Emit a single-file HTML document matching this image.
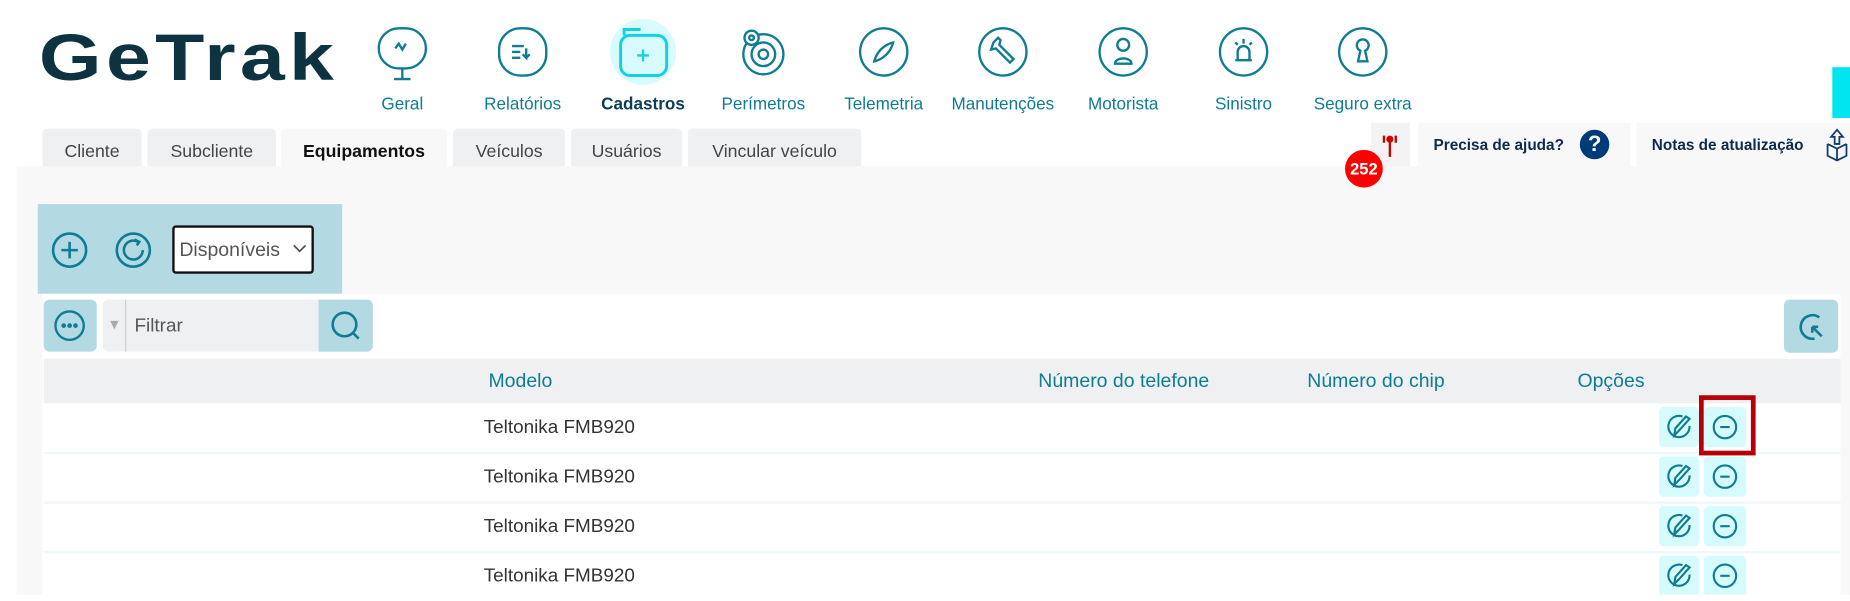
<!DOCTYPE html>
<html><head><meta charset="utf-8"><style>
html,body{margin:0;padding:0;background:#fff;overflow:hidden;width:1850px;height:595px}
#w{position:absolute;left:0;top:0;width:1568px;height:504px;transform:scale(1.17985);transform-origin:0 0;font-family:"Liberation Sans",sans-serif}
.a{position:absolute}
.nav{position:absolute;top:81px;width:120px;text-align:center;font-size:14.5px;color:#0e7c93}
.tab{position:absolute;top:109px;height:32px;background:#eef0f2;border-radius:4px 4px 0 0;font-size:15px;color:#444;text-align:center;line-height:40px}
.hd{position:absolute;top:314px;font-size:16.5px;color:#0e7c93}
.row{position:absolute;left:37px;width:1523px;height:41px;border-bottom:2px solid #eef7f9}
.cell{position:absolute;left:373px;top:12px;font-size:16px;color:#333}
</style></head><body><div id="w">
<div class="a" style="left:33px;top:17px;font-size:56px;font-weight:bold;color:#0d3340;letter-spacing:3px;transform:scaleX(1.22);transform-origin:0 0;line-height:64px">GeTrak</div>

<svg class="a" style="left:0;top:0" width="1300" height="80" fill="none" stroke="#0e7c93" stroke-width="2">
<rect x="321" y="24" width="40" height="34" rx="17"/><path d="M341 58v8M334 67h14M335 41l3-4 3 5 3-5"/>
<rect x="423" y="24" width="40" height="40" rx="18"/><path d="M434 39h10M434 44h7M434 49h7M446 41v8l-3-3M446 49l3-3"/>
<circle cx="545" cy="44" r="28" fill="#d7fbfe" stroke="none"/><rect x="526" y="30" width="39" height="34" rx="8" stroke="#12d2e2" stroke-width="2.5"/><path d="M529 30v-5h14" stroke="#12d2e2" stroke-width="2.5"/><path d="M545 42v10M540 47h10" stroke="#12d2e2"/>
<circle cx="647" cy="46" r="17"/><circle cx="647" cy="46" r="10"/><circle cx="647" cy="46" r="4"/><circle cx="637" cy="32" r="6" fill="#fff"/><circle cx="637" cy="32" r="2"/>
<rect x="729" y="24" width="40" height="40" rx="20"/><path d="M741 52c2-8 8-14 16-16-2 8-8 14-16 16z"/>
<rect x="830" y="24" width="40" height="40" rx="20"/><path d="M842 36l4-4 2 2-1 4 12 12-3 3-12-12-4 1z"/>
<rect x="932" y="24" width="40" height="40" rx="20"/><circle cx="952" cy="38" r="5"/><path d="M945 54c0-6 14-6 14 0z"/>
<rect x="1034" y="24" width="40" height="40" rx="20"/><path d="M1047 51h14M1049 51v-7a5 5 0 0 1 10 0v7M1054 33v4M1047 36l2 2M1061 36l-2 2"/>
<rect x="1135" y="24" width="40" height="40" rx="20"/><path d="M1151 52h8l-2-9a5 5 0 1 0-4 0z"/>
</svg>
<div class="nav" style="left:281px">Geral</div>
<div class="nav" style="left:383px">Relatórios</div>
<div class="nav" style="left:485px;font-weight:bold;color:#0d3d56">Cadastros</div>
<div class="nav" style="left:587px">Perímetros</div>
<div class="nav" style="left:689px">Telemetria</div>
<div class="nav" style="left:790px">Manutenções</div>
<div class="nav" style="left:892px">Motorista</div>
<div class="nav" style="left:994px">Sinistro</div>
<div class="nav" style="left:1095px">Seguro extra</div>

<div class="a" style="left:1553px;top:57px;width:15px;height:43px;background:#00e5f0"></div>

<div class="a" style="left:14px;top:141px;width:1554px;height:363px;background:#f8f8f8"></div>
<div class="tab" style="left:36px;width:84px">Cliente</div>
<div class="tab" style="left:125px;width:109px">Subcliente</div>
<div class="tab" style="left:238px;width:141px;background:#f8f8f8;font-weight:bold;color:#111">Equipamentos</div>
<div class="tab" style="left:384px;width:95px">Veículos</div>
<div class="tab" style="left:484px;width:94px">Usuários</div>
<div class="tab" style="left:583px;width:147px">Vincular veículo</div>

<div class="a" style="left:1162px;top:104px;width:33px;height:37px;background:#f3f3f3"></div>
<svg class="a" style="left:1170px;top:113px" width="16" height="22" fill="none" stroke="#c00" stroke-width="2"><path d="M8 6v14"/><circle cx="8" cy="5" r="2" fill="#c00"/><path d="M3 2v6M13 2v6"/></svg>
<div class="a" style="left:1140px;top:127px;width:32px;height:32px;border-radius:50%;background:#f00;color:#fff;font-weight:bold;font-size:14px;text-align:center;line-height:32px">252</div>
<div class="a" style="left:1202px;top:104px;width:180px;height:37px;background:#f8f8f8"></div>
<div class="a" style="left:1215px;top:115px;font-size:13px;font-weight:bold;color:#0d2b4e">Precisa de ajuda?</div>
<div class="a" style="left:1339px;top:110px;width:25px;height:25px;border-radius:50%;background:#003a78;color:#fff;font-weight:bold;font-size:19px;text-align:center;line-height:25px">?</div>
<div class="a" style="left:1387px;top:104px;width:181px;height:37px;background:#f8f8f8"></div>
<div class="a" style="left:1400px;top:115px;font-size:13px;font-weight:bold;color:#0d2b4e">Notas de atualização</div>
<svg class="a" style="left:1547px;top:108px" width="21" height="30" fill="none" stroke="#0d3d6e" stroke-width="1.5"><path d="M10 2l-5 6h3v6h4V8h3zM2 14l8 4 8-4M2 14v10l8 4 8-4V14M10 18v10"/></svg>

<div class="a" style="left:32px;top:173px;width:258px;height:76px;background:#b3d9e2"></div>
<svg class="a" style="left:40px;top:194px" width="100" height="36" fill="none" stroke="#0e7c93" stroke-width="2.2"><circle cx="19" cy="18" r="14"/><path d="M19 11v14M12 18h14"/><circle cx="73" cy="18" r="14"/><path d="M77 11a8 8 0 1 0 4 7"/><path d="M74 9l4 2-2 3"/></svg>
<div class="a" style="left:146px;top:191px;width:116px;height:37px;background:#fff;border:2px solid #111;border-radius:3px"></div>
<div class="a" style="left:152px;top:203px;font-size:16.5px;color:#555">Disponíveis</div>
<svg class="a" style="left:248px;top:207px" width="12" height="8" fill="none" stroke="#555" stroke-width="1.5"><path d="M1 1l5 5 5-5"/></svg>

<div class="a" style="left:36px;top:249px;width:1524px;height:255px;background:#fff"></div>
<div class="a" style="left:37px;top:254px;width:45px;height:44px;background:#b3d9e2;border-radius:5px"></div>
<svg class="a" style="left:45px;top:262px" width="30" height="28" fill="none" stroke="#0e7c93" stroke-width="2"><ellipse cx="14" cy="14" rx="12" ry="12"/><circle cx="9" cy="14" r="1" fill="#0e7c93"/><circle cx="14" cy="14" r="1" fill="#0e7c93"/><circle cx="19" cy="14" r="1" fill="#0e7c93"/></svg>
<div class="a" style="left:87px;top:254px;width:229px;height:44px;background:#eef0f2;border-radius:5px"></div>
<div class="a" style="left:91px;top:268px;font-size:12px;color:#aaa">▼</div>
<div class="a" style="left:106px;top:254px;width:1px;height:44px;background:#ccc"></div>
<div class="a" style="left:114px;top:268px;font-size:16px;color:#555">Filtrar</div>
<div class="a" style="left:270px;top:254px;width:46px;height:44px;background:#b3d9e2;border-radius:0 5px 5px 0"></div>
<svg class="a" style="left:280px;top:263px" width="28" height="28" fill="none" stroke="#0e7c93" stroke-width="2.2"><circle cx="12" cy="12" r="10"/><path d="M19 19l5 5"/></svg>
<div class="a" style="left:1512px;top:254px;width:46px;height:45px;background:#b3d9e2;border-radius:5px"></div>
<svg class="a" style="left:1522px;top:263px" width="28" height="28" fill="none" stroke="#0e7c93" stroke-width="2.2"><path d="M20 6a10 10 0 1 0-4 18"/><path d="M14 14l8 8M14 14v5M14 14h5"/></svg>

<div class="a" style="left:37px;top:304px;width:1523px;height:38px;background:#eff0f2"></div>
<div class="hd" style="left:414px">Modelo</div>
<div class="hd" style="left:880px">Número do telefone</div>
<div class="hd" style="left:1108px">Número do chip</div>
<div class="hd" style="left:1337px">Opções</div>

<div class="row" style="top:342px"><div class="cell">Teltonika FMB920</div></div>
<div class="row" style="top:384px"><div class="cell">Teltonika FMB920</div></div>
<div class="row" style="top:426px"><div class="cell">Teltonika FMB920</div></div>
<div class="row" style="top:468px;border:0"><div class="cell">Teltonika FMB920</div></div>

<svg class="a" style="left:1400px;top:340px" width="90" height="164">
<g id="r"><rect x="6" y="5" width="34" height="34" rx="4" fill="#d5fbfd"/><rect x="44" y="5" width="36" height="34" rx="4" fill="#d5fbfd"/>
<g fill="none" stroke="#0e7c93" stroke-width="1.8"><path d="M26 13a9 9 0 1 0 6 8"/><path d="M19 29l1-6 9-10 3 2-9 10z"/><circle cx="62" cy="22" r="9.5"/><path d="M58 22h8"/></g></g>
<use href="#r" y="42"/><use href="#r" y="84"/><use href="#r" y="126"/>
</svg>
<div class="a" style="left:1440px;top:335px;width:40px;height:43px;border:4px solid #b5000a"></div>
</div></body></html>
